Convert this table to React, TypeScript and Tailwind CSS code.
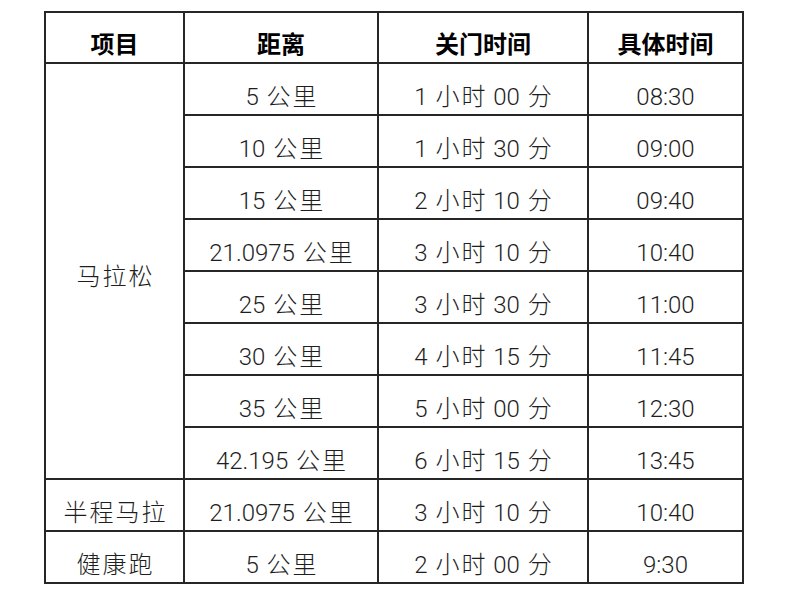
import React from "react";

const marathon: [string, string, string][] = [
  ["5 公里", "1 小时 00 分", "08:30"],
  ["10 公里", "1 小时 30 分", "09:00"],
  ["15 公里", "2 小时 10 分", "09:40"],
  ["21.0975 公里", "3 小时 10 分", "10:40"],
  ["25 公里", "3 小时 30 分", "11:00"],
  ["30 公里", "4 小时 15 分", "11:45"],
  ["35 公里", "5 小时 00 分", "12:30"],
  ["42.195 公里", "6 小时 15 分", "13:45"],
];

function T({ s }: { s: string }) {
  const parts = s.split(/([\u4e00-\u9fff]+)/);
  return (
    <>
      {parts.map((p, i) =>
        /[\u4e00-\u9fff]/.test(p) ? (
          <span key={i} className="tracking-[2px] mr-[-2px]">
            {p}
          </span>
        ) : (
          <span key={i}>{p}</span>
        )
      )}
    </>
  );
}

const cell =
  "border-r-2 border-b-2 border-[#262626] flex items-end justify-center pb-[2px] leading-[30px] whitespace-pre [word-spacing:2px]";
const head = `${cell} font-bold text-black`;

export default function App() {
  return (
    <div
      className="w-[800px] h-[599px] bg-white text-[24px] text-[#1e1e1e] font-light"
      style={{ fontFamily: 'Roboto, "Noto Sans CJK SC", sans-serif' }}
    >
      <div className="pt-[11px] pl-[44px]">
        <div className="grid grid-cols-[139px_194px_210px_155px] grid-rows-[51px_repeat(10,52px)] w-[700px] border-l-2 border-t-2 border-[#262626]">
          <div className={head}>项目</div>
          <div className={head}>距离</div>
          <div className={head}>关门时间</div>
          <div className={head}>具体时间</div>

          <div className="row-span-8 border-r-2 border-b-2 border-[#262626] flex items-center justify-center pt-[12px] leading-[30px]">
            <T s="马拉松" />
          </div>
          {marathon.map(([d, c, t], i) => (
            <React.Fragment key={i}>
              <div className={cell}>
                <T s={d} />
              </div>
              <div className={cell}>
                <T s={c} />
              </div>
              <div className={cell}>{t}</div>
            </React.Fragment>
          ))}

          <div className={cell}>
            <T s="半程马拉" />
          </div>
          <div className={cell}>
            <T s="21.0975 公里" />
          </div>
          <div className={cell}>
            <T s="3 小时 10 分" />
          </div>
          <div className={cell}>10:40</div>

          <div className={cell}>
            <T s="健康跑" />
          </div>
          <div className={cell}>
            <T s="5 公里" />
          </div>
          <div className={cell}>
            <T s="2 小时 00 分" />
          </div>
          <div className={cell}>9:30</div>
        </div>
      </div>
    </div>
  );
}
